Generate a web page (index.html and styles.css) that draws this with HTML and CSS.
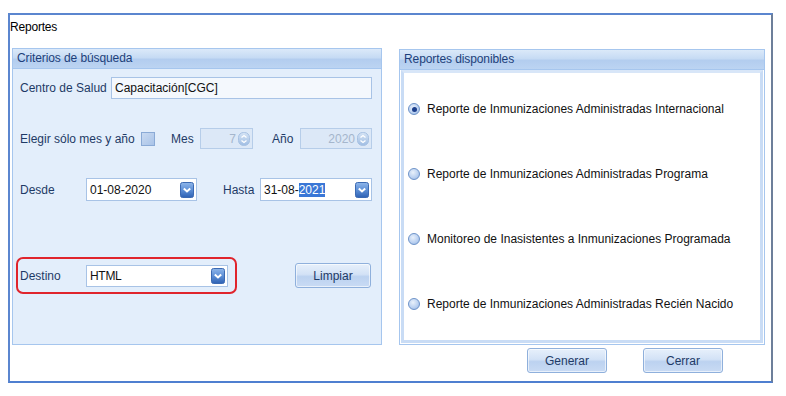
FILE: index.html
```html
<!DOCTYPE html>
<html>
<head>
<meta charset="utf-8">
<link rel="stylesheet" href="styles.css">
</head>
<body>
<div class="window">
  <div class="title">Reportes</div>
  <div class="groups">
    <div class="group left">
      <div class="ghead">Criterios de búsqueda</div>
      <div class="gbody">
        <div class="row r1">
          <span class="lbl w-centro">Centro de Salud</span>
          <div class="input wide">Capacitación[CGC]</div>
        </div>
        <div class="row r2">
          <span class="lbl w-elegir">Elegir sólo mes y año</span>
          <span class="check"></span>
          <span class="lbl w-mes">Mes</span>
          <div class="spin s-mes"><span class="val">7</span><span class="spinbtn"><svg width="12" height="14" viewBox="0 0 12 14"><defs><linearGradient id="sg" x1="0" y1="0" x2="0" y2="1"><stop offset="0" stop-color="#d6e4f5"/><stop offset="1" stop-color="#9fbde3"/></linearGradient></defs><rect x="0.5" y="0.5" width="11" height="13" rx="5" fill="url(#sg)" stroke="#a7c1e2"/><path d="M3.5 5.5 L6 3.5 L8.5 5.5 M3.5 8.5 L6 10.5 L8.5 8.5" fill="none" stroke="#fff" stroke-width="1.3"/></svg></span></div>
          <span class="lbl w-ano">Año</span>
          <div class="spin s-ano"><span class="val">2020</span><span class="spinbtn"><svg width="12" height="14" viewBox="0 0 12 14"><rect x="0.5" y="0.5" width="11" height="13" rx="5" fill="url(#sg)" stroke="#a7c1e2"/><path d="M3.5 5.5 L6 3.5 L8.5 5.5 M3.5 8.5 L6 10.5 L8.5 8.5" fill="none" stroke="#fff" stroke-width="1.3"/></svg></span></div>
        </div>
        <div class="row r3">
          <span class="lbl w-desde">Desde</span>
          <div class="input date d1"><span>01-08-2020</span><span class="ddbtn"><svg width="14" height="16" viewBox="0 0 14 16"><defs><linearGradient id="dg" x1="0" y1="0" x2="0" y2="1"><stop offset="0" stop-color="#8fb6ea"/><stop offset="0.5" stop-color="#5d8fd6"/><stop offset="1" stop-color="#2f62b4"/></linearGradient></defs><rect x="0.5" y="0.5" width="13" height="15" rx="2" fill="url(#dg)" stroke="#3c6ab3"/><path d="M3.8 6.5 L7 9.5 L10.2 6.5" fill="none" stroke="#fff" stroke-width="2"/></svg></span></div>
          <span class="lbl w-hasta">Hasta</span>
          <div class="input date d2"><span>31-08-<span class="sel">2021</span></span><span class="ddbtn"><svg width="14" height="16" viewBox="0 0 14 16"><rect x="0.5" y="0.5" width="13" height="15" rx="2" fill="url(#dg)" stroke="#3c6ab3"/><path d="M3.8 6.5 L7 9.5 L10.2 6.5" fill="none" stroke="#fff" stroke-width="2"/></svg></span></div>
        </div>
        <div class="row r4">
          <div class="redbox">
            <span class="lbl w-destino">Destino</span>
            <div class="input date d3"><span class="html">HTML</span><span class="ddbtn"><svg width="14" height="16" viewBox="0 0 14 16"><rect x="0.5" y="0.5" width="13" height="15" rx="2" fill="url(#dg)" stroke="#3c6ab3"/><path d="M3.8 6.5 L7 9.5 L10.2 6.5" fill="none" stroke="#fff" stroke-width="2"/></svg></span></div>
          </div>
          <button class="btn limpiar">Limpiar</button>
        </div>
      </div>
    </div>
    <div class="group right">
      <div class="ghead">Reportes disponibles</div>
      <div class="gbody rbody">
        <div class="radio-row"><span class="radio on"></span><span>Reporte de Inmunizaciones Administradas Internacional</span></div>
        <div class="radio-row"><span class="radio"></span><span>Reporte de Inmunizaciones Administradas Programa</span></div>
        <div class="radio-row"><span class="radio"></span><span>Monitoreo de Inasistentes a Inmunizaciones Programada</span></div>
        <div class="radio-row"><span class="radio"></span><span>Reporte de Inmunizaciones Administradas Recién Nacido</span></div>
      </div>
    </div>
  </div>
  <div class="buttons">
    <button class="btn big">Generar</button>
    <button class="btn big">Cerrar</button>
  </div>
</div>
</body>
</html>
```

FILE: styles.css
```css
* { box-sizing: border-box; }
body {
  margin: 0;
  background: #fff;
  font-family: "Liberation Sans", Arial, sans-serif;
  font-size: 12px;
  color: #111;
}
.window {
  margin: 13px 0 0 8px;
  width: 765px;
  height: 370px;
  border: 2px solid #5b86cf;
  border-right: 2px solid #6d7f9a;
  border-bottom-color: #4f7fd0;
  background: #fff;
  display: flex;
  flex-direction: column;
}
.title {
  height: 33px;
  padding: 4px 0 0 0;
  line-height: 16px;
  color: #000;
  letter-spacing: -0.2px;
}
.groups {
  display: flex;
  padding-left: 2px;
  height: 297px;
  flex: none;
}
.group {
  border: 1px solid #a6c6ee;
  display: flex;
  flex-direction: column;
  min-height: 0;
}
.group.left { width: 370px; height: 297px; background: #e3eefb; }
.group.right { width: 366px; margin-left: 17px; margin-top: 1px; height: 296px; }
.ghead {
  height: 20px;
  flex: none;
  line-height: 19px;
  padding-left: 4px;
  color: #1d3f7a;
  background: linear-gradient(to bottom, #dbe9f9 0%, #c6dbf4 45%, #b3cdef 55%, #bcd4f2 100%);
  border-bottom: 1px solid #a6c6ee;
  letter-spacing: -0.1px;
}
.gbody { flex: 1; min-height: 0; padding: 8px 0 0 7px; }
.rbody {
  background: #fff;
  margin: 0 1px 1px 1px;
  border: 3px solid #c9dcf5;
  border-top: 3px solid #d8e6f8;
  padding: 28px 0 0 4px;
  overflow: hidden;
}
.row { display: flex; align-items: center; }
.lbl { color: #1e3a66; white-space: nowrap; }
.r1 { height: 22px; }
.w-centro { width: 91px; }
.input {
  height: 22px;
  border: 1px solid #a8c3e6;
  background: #f4f8fd;
  padding-left: 3px;
  display: flex;
  align-items: center;
  color: #111;
}
.wide { width: 261px; }
.r2 { height: 21px; margin-top: 29px; }
.w-elegir { width: 121px; }
.check {
  width: 14px; height: 14px;
  border: 1px solid #8aaad6;
  background: linear-gradient(135deg, #c9daf1, #a9c3e8);
  margin-right: 16px;
}
.w-mes { width: 29px; }
.w-ano { width: 28px; margin-left: 19px; }
.spin {
  height: 21px;
  border: 1px solid #b6cde9;
  background: #dce8f7;
  display: flex;
  align-items: center;
  justify-content: flex-end;
  color: #a5b6cc;
  padding-right: 2px;
}
.spin .val { margin-right: 2px; }
.spinbtn { display: flex; }
.s-mes { width: 53px; }
.s-ano { width: 72px; }
.r3 { height: 23px; margin-top: 29px; }
.w-desde { width: 66px; }
.w-hasta { width: 37px; margin-left: 26px; }
.date {
  height: 23px;
  background: #fff;
  justify-content: space-between;
  padding-right: 2px;
}
.ddbtn { display: flex; }
.d1 { width: 111px; }
.d2 { width: 112px; }
.sel { background: #3a77d6; color: #fff; }
.r4 { margin-top: 56px; height: 37px; }
.redbox {
  margin-left: -4px;
  width: 221px;
  height: 37px;
  border: 2px solid #e0242c;
  border-radius: 7px;
  display: flex;
  align-items: center;
  padding-left: 2px;
}
.w-destino { width: 66px; }
.d3 { width: 142px; height: 22px; }
.html { letter-spacing: -0.3px; }
.btn {
  font-family: "Liberation Sans", Arial, sans-serif;
  font-size: 12px;
  color: #1e3a66;
  border: 1px solid #8fb0dc;
  border-radius: 3px;
  background: linear-gradient(to bottom, #e7f0fb 0%, #d3e2f6 45%, #bcd2f0 55%, #c9dbf4 100%);
  box-shadow: inset 0 0 0 1px rgba(255,255,255,0.6);
  padding: 0;
}
.limpiar { width: 76px; height: 25px; margin-left: 58px; }
.radio-row {
  display: flex;
  align-items: center;
  height: 16px;
  margin-bottom: 49px;
  color: #111;
}
.radio-row:last-child { margin-bottom: 0; }
.radio {
  width: 12px; height: 12px;
  border-radius: 50%;
  border: 1px solid #6d93c9;
  background: radial-gradient(circle at 40% 35%, #e9f1fb 0%, #b8cff0 60%, #90b0dd 100%);
  margin-right: 7px;
  position: relative;
}
.radio.on::after {
  content: "";
  position: absolute;
  left: 2.5px; top: 2.5px;
  width: 5px; height: 5px;
  border-radius: 50%;
  background: #1c3f8c;
}
.buttons {
  display: flex;
  padding: 3px 0 0 517px;
  gap: 36px;
}
.big { width: 80px; height: 25px; }
```
